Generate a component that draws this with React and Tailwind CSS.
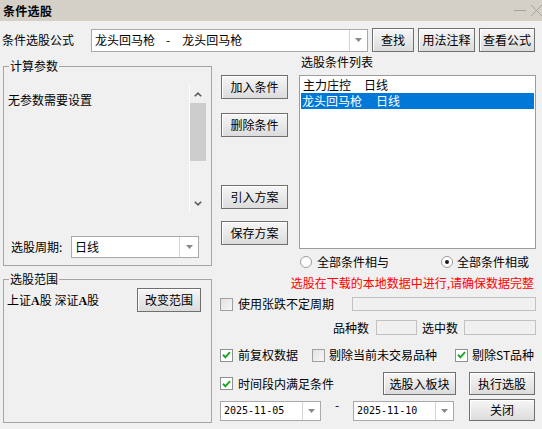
import React from "react"

const FONT = "font-['Noto_Sans_CJK_SC','Noto_Sans',sans-serif]"

const Btn = ({ w, h = "h-[24px]", className = "", children }) => (
  <button
    className={`${w} ${h} ${className} shrink-0 border border-[#707070] bg-linear-to-b from-[#f6f6f6] to-[#dcdcdc] shadow-[inset_1px_1px_0_#ffffff] flex items-center justify-center text-[12px] leading-[14px] text-black`}
  >
    {children}
  </button>
)

const Arrow = () => (
  <svg width="7" height="4" viewBox="0 0 7 4">
    <path d="M0 0 L7 0 L3.5 4 Z" fill="#8a8a8a" />
  </svg>
)

const Combo = ({ w, h, drop, children, textClass = "pl-[3px]" }) => (
  <div className={`${w} ${h} shrink-0 flex border border-[#a9a9a9] bg-white`}>
    <div className={`flex-1 flex items-center overflow-hidden whitespace-nowrap ${textClass}`}>{children}</div>
    <div className={`${drop} border-l border-[#d4d4d4] flex items-center justify-center`}>
      <Arrow />
    </div>
  </div>
)

const Check = ({ checked }) =>
  checked ? (
    <span className="w-[13px] h-[13px] shrink-0 border border-[#8e8f8f] bg-white flex items-center justify-center">
      <svg width="9" height="8" viewBox="0 0 9 8">
        <path d="M1 3.8 L3.4 6.3 L8 1.2" stroke="#1fa52a" strokeWidth="2" fill="none" />
      </svg>
    </span>
  ) : (
    <span className="w-[13px] h-[13px] shrink-0 border border-[#a0a0a0] bg-linear-to-br from-[#e2e2e2] to-[#f7f7f7]" />
  )

const Radio = ({ checked }) => (
  <span className="w-[12px] h-[12px] shrink-0 rounded-full border border-[#9c9c9c] bg-white flex items-center justify-center">
    {checked && <span className="w-[4px] h-[4px] rounded-full bg-[#1a1a1a]" />}
  </span>
)

const Group = ({ label, className, children }) => (
  <div className={`relative border border-[#a5a5a5] ${className}`}>
    <span className="absolute -top-[8px] left-[5px] px-[1px] bg-[#f0f0f0] leading-[14px]">{label}</span>
    {children}
  </div>
)

const ScrollBar = () => (
  <div className="w-[17px] h-[127px] mr-[5px] border-l border-white flex flex-col">
    <div className="h-[18px] flex items-center justify-center">
      <svg width="8" height="5" viewBox="0 0 8 5">
        <path d="M0.8 4.3 L4 1.2 L7.2 4.3" stroke="#5a5a5a" strokeWidth="1.6" fill="none" />
      </svg>
    </div>
    <div className="h-[58px] bg-[#cdcdcd]" />
    <div className="flex-1" />
    <div className="h-[17px] flex items-center justify-center">
      <svg width="8" height="5" viewBox="0 0 8 5">
        <path d="M0.8 0.7 L4 3.8 L7.2 0.7" stroke="#5a5a5a" strokeWidth="1.6" fill="none" />
      </svg>
    </div>
  </div>
)

export default function App() {
  return (
    <div className={`w-[542px] h-[429px] overflow-hidden bg-[#f0f0f0] text-[12px] leading-[14px] text-black ${FONT}`}>
      {/* title bar */}
      <div className="h-[21px] bg-[#d4d0c8] flex items-center justify-between pl-[3px]">
        <span className="font-bold tracking-[0.3px]">条件选股</span>
        <svg width="30" height="21" viewBox="0 0 30 21" className="-mr-[1px]">
          <path d="M1 10.5 L13 10.5" stroke="#a3a3a3" strokeWidth="1" />
          <path d="M18 5 L29 16 M29 5 L18 16" stroke="#a3a3a3" strokeWidth="1" />
        </svg>
      </div>

      {/* formula row */}
      <div className="mt-[7px] h-[24px] flex items-center">
        <span className="pl-[2px] w-[91px]">条件选股公式</span>
        <Combo w="w-[277px]" h="h-[23px]" drop="w-[18px]" textClass="pl-[3px]">
          <span>龙头回马枪</span>
          <span className="ml-[11px] mr-[12px]">-</span>
          <span>龙头回马枪</span>
        </Combo>
        <Btn w="w-[42px]" className="ml-[4px]">查找</Btn>
        <Btn w="w-[57px]" className="ml-[4px]">用法注释</Btn>
        <Btn w="w-[56px]" className="ml-[4px]">查看公式</Btn>
      </div>

      <div className="flex items-start">
        {/* left column */}
        <div className="ml-[3px] w-[209px] shrink-0">
          <Group label="计算参数" className="mt-[14px] h-[200px]">
            <div className="pt-[18px] flex">
              <div className="flex-1 pl-[4px] pt-[8px]">无参数需要设置</div>
              <ScrollBar />
            </div>
            <div className="mt-[24px] h-[22px] flex items-center pl-[7px]">
              <span className="w-[60px]">选股周期:</span>
              <Combo w="w-[128px]" h="h-[22px]" drop="w-[19px]">
                日线
              </Combo>
            </div>
          </Group>

          <Group label="选股范围" className="mt-[13px] h-[144px]">
            <div className="pt-[8px] h-[32px] flex items-center">
              <span className="pl-[3px] whitespace-nowrap">
                上证<b className="font-['Liberation_Serif',serif]">A</b>股 深证<b className="font-['Liberation_Serif',serif]">A</b>股
              </span>
              <Btn w="w-[64px]" className="ml-auto mr-[10px]">改变范围</Btn>
            </div>
          </Group>
        </div>

        {/* right column */}
        <div className="ml-[8px] w-[316px] shrink-0">
          <div className="flex items-start">
            <div className="ml-[1px] w-[67px] flex flex-col">
              <Btn w="w-[67px]" className="mt-[23px]">加入条件</Btn>
              <Btn w="w-[67px]" className="mt-[14px]">删除条件</Btn>
              <Btn w="w-[67px]" className="mt-[48px]">引入方案</Btn>
              <Btn w="w-[67px]" className="mt-[12px]">保存方案</Btn>
            </div>
            <div className="ml-[11px] w-[237px]">
              <div className="mt-[3px] pl-[2px]">选股条件列表</div>
              <div className="mt-[6px] h-[174px] border border-[#9c9c9c] bg-white p-[1px]">
                <div className="h-[16px] flex items-center pl-[2px]">
                  <span>主力庄控</span>
                  <span className="ml-[13px]">日线</span>
                </div>
                <div className="h-[16px] flex items-center pl-[1px] bg-[#0078d7] text-white">
                  <span>龙头回马枪</span>
                  <span className="ml-[14px]">日线</span>
                </div>
              </div>
            </div>
          </div>

          <div className="mt-[6px] h-[14px] flex items-center">
            <span className="ml-[80px]"><Radio /></span>
            <span className="ml-[5px]">全部条件相与</span>
            <span className="ml-[52px]"><Radio checked /></span>
            <span className="ml-[4px]">全部条件相或</span>
          </div>

          <div className="mt-[7px] text-right pr-[2px] text-[#ff0000] whitespace-nowrap">
            选股在下载的本地数据中进行,请确保数据完整
          </div>

          <div className="mt-[7px] h-[14px] flex items-center">
            <Check />
            <span className="ml-[5px]">使用张跌不定周期</span>
            <div className="ml-auto w-[184px] h-[14px] border border-[#c2c2c2] bg-[#f0f0f0]" />
          </div>

          <div className="mt-[9px] h-[15px] flex items-center justify-end">
            <span>品种数</span>
            <div className="ml-[7px] w-[41px] h-[15px] border border-[#c2c2c2] bg-[#f0f0f0]" />
            <span className="ml-[5px]">选中数</span>
            <div className="ml-[6px] w-[72px] h-[15px] border border-[#c2c2c2] bg-[#f0f0f0]" />
          </div>

          <div className="mt-[13px] h-[14px] flex items-center">
            <div className="w-[92px] flex items-center">
              <Check checked />
              <span className="ml-[5px]">前复权数据</span>
            </div>
            <div className="w-[143px] flex items-center">
              <Check />
              <span className="ml-[4px]">剔除当前未交易品种</span>
            </div>
            <div className="flex items-center">
              <Check checked />
              <span className="ml-[4px]">剔除ST品种</span>
            </div>
          </div>

          <div className="mt-[10px] h-[23px] flex items-center">
            <Check checked />
            <span className="ml-[5px]">时间段内满足条件</span>
            <Btn w="w-[73px]" h="h-[23px]" className="ml-auto">选股入板块</Btn>
            <Btn w="w-[66px]" h="h-[23px]" className="ml-[13px] mr-[1px]">执行选股</Btn>
          </div>

          <div className="mt-[4px] h-[22px] flex items-end">
            <Combo w="w-[101px]" h="h-[20px]" drop="w-[18px]" textClass="pl-[3px] font-['DejaVu_Sans_Mono',monospace] text-[10px]">
              2025-11-05
            </Combo>
            <span className="w-[32px] self-start text-center leading-[12px]">-</span>
            <Combo w="w-[101px]" h="h-[20px]" drop="w-[18px]" textClass="pl-[3px] font-['DejaVu_Sans_Mono',monospace] text-[10px]">
              2025-11-10
            </Combo>
            <Btn w="w-[66px]" h="h-[22px]" className="ml-auto mr-[1px]">关闭</Btn>
          </div>
        </div>
      </div>
    </div>
  )
}
